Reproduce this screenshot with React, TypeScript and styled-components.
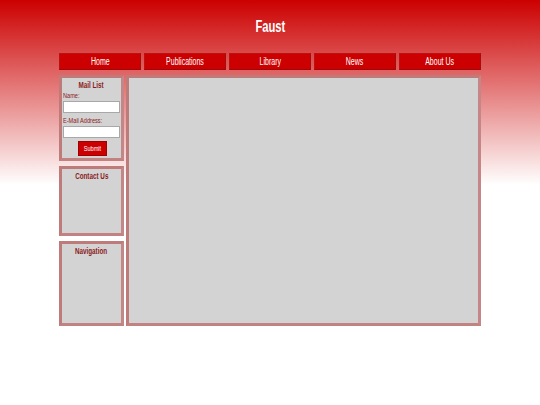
import { createGlobalStyle, styled } from 'styled-components';

const GlobalStyle = createGlobalStyle`
  html, body {
    margin: 0;
    padding: 0;
  }
  body {
    min-height: 405px;
    background: linear-gradient(to bottom, #cc0000 0px, #ffffff 185px, #ffffff 100%);
    background-repeat: no-repeat;
    background-color: #fff;
    font-family: "Liberation Sans", Arial, sans-serif;
  }
`;

const navItems = ['Home', 'Publications', 'Library', 'News', 'About Us'];

export default function App() {
  return (
    <>
      <GlobalStyle />
      <Page>
        <Header>
          <Narrow>Faust</Narrow>
        </Header>
        <NavBar>
          {navItems.map((item) => (
            <NavButton key={item}>
              <Narrow>{item}</Narrow>
            </NavButton>
          ))}
        </NavBar>
        <Main>
          <Sidebar>
            <Box $height={86}>
              <BoxTitle>
                <Narrow>Mail List</Narrow>
              </BoxTitle>
              <Label>
                <Narrow $left>Name:</Narrow>
              </Label>
              <Field type="text" />
              <Label>
                <Narrow $left>E-Mail Address:</Narrow>
              </Label>
              <Field type="text" />
              <SubmitRow>
                <Submit>
                  <Narrow>Submit</Narrow>
                </Submit>
              </SubmitRow>
            </Box>
            <Box $height={70}>
              <BoxTitle>
                <Narrow>Contact Us</Narrow>
              </BoxTitle>
            </Box>
            <Box $height={85}>
              <BoxTitle>
                <Narrow>Navigation</Narrow>
              </BoxTitle>
            </Box>
          </Sidebar>
          <Content />
        </Main>
      </Page>
    </>
  );
}

// no narrow font installed, so squeeze the regular one
const Narrow = styled.span<{ $left?: boolean }>`
  display: inline-block;
  transform: scaleX(0.7);
  transform-origin: ${(p) => (p.$left ? 'left center' : 'center')};
  white-space: nowrap;
`;

const Page = styled.div`
  width: 422px;
  margin: 0 auto;
`;

const Header = styled.h1`
  margin: 0;
  height: 53px;
  display: flex;
  align-items: center;
  justify-content: center;
  color: #fff;
  font-size: 16px;
  font-weight: bold;
`;

const NavBar = styled.div`
  display: grid;
  grid-template-columns: repeat(5, 1fr);
  gap: 3px;
  height: 17px;
`;

const NavButton = styled.div`
  background: #cc0000;
  border: 1px solid #bb1111;
  border-bottom-color: #9a0a0a;
  border-right-color: #a50d0d;
  box-sizing: border-box;
  color: #fff;
  font-size: 10px;
  display: flex;
  align-items: center;
  justify-content: center;
`;

const Main = styled.div`
  display: flex;
  gap: 2px;
  margin-top: 5px;
`;

const Sidebar = styled.div`
  width: 65px;
  display: flex;
  flex-direction: column;
  gap: 5px;
`;

const Box = styled.div<{ $height: number }>`
  height: ${(p) => p.$height}px;
  box-sizing: border-box;
  background: #d3d3d3;
  border: 3px solid #c28080;
  border-color: #bf7a7a #c48686 #c28282 #bf7a7a;
  padding: 2px 0 0;
  display: flex;
  flex-direction: column;
`;

const BoxTitle = styled.div`
  text-align: center;
  color: #8b1a1a;
  font-weight: bold;
  font-size: 9px;
  line-height: 10px;
  margin-bottom: 1px;
`;

const Label = styled.div`
  color: #8b1a1a;
  font-size: 8px;
  line-height: 9px;
  padding-left: 1px;
`;

const Field = styled.input`
  box-sizing: border-box;
  width: 57px;
  height: 12px;
  margin: 1px 0 3px 1px;
  padding: 0;
  background: #fff;
  border: 1px solid #a8a8a8;
`;

const SubmitRow = styled.div`
  display: flex;
  justify-content: center;
  padding-left: 1px;
`;

const Submit = styled.button`
  width: 29px;
  height: 15px;
  padding: 0;
  background: #cc0000;
  border: 1px solid #a00000;
  color: #fff;
  font-family: inherit;
  font-size: 8px;
`;

const Content = styled.div`
  flex: 1;
  height: 251px;
  box-sizing: border-box;
  background: #d3d3d3;
  border: 3px solid #c28080;
  border-color: #bf7a7a #c48686 #c28282 #bf7a7a;
`;
